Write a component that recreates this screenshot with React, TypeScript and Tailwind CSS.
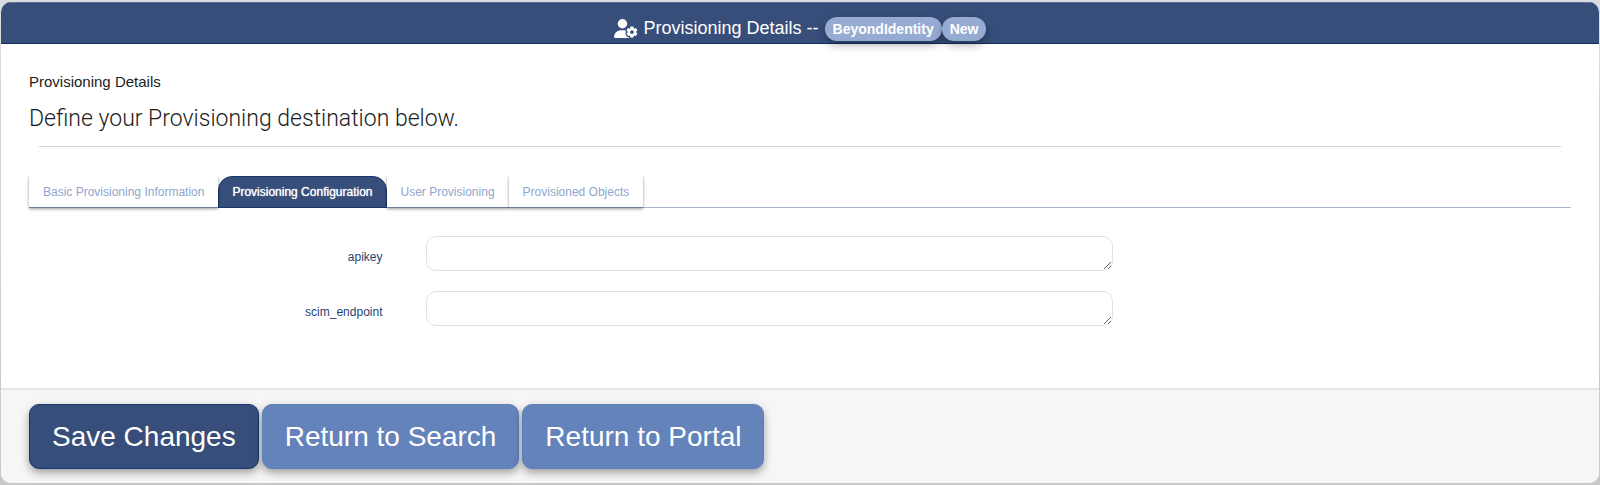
import { FaUserGear } from "react-icons/fa6";

const tabs = [
  "Basic Provisioning Information",
  "Provisioning Configuration",
  "User Provisioning",
  "Provisioned Objects",
];
const activeTab = "Provisioning Configuration";
const fields = ["apikey", "scim_endpoint"];

function Badge({ children }: { children: string }) {
  return (
    <span className="rounded-full bg-[#96abd2] px-2 text-sm leading-6 font-bold shadow-[0_4px_8px_rgba(0,0,0,0.3)]">
      {children}
    </span>
  );
}

function ActionButton({ label, primary = false }: { label: string; primary?: boolean }) {
  return (
    <button
      type="button"
      className={`h-[65px] rounded-[10px] border px-[22px] text-[28px] leading-8 text-white shadow-[0_4px_8px_rgba(0,0,0,0.35)] ${
        primary ? "border-[#17386a] bg-[#364e79]" : "border-[#5f7fb8] bg-[#6483ba]"
      }`}
    >
      {label}
    </button>
  );
}

export default function App() {
  return (
    <div className="bg-linear-to-b from-[#dadce0] to-[#c6c7c9] px-px pt-[2px] pb-[3px] font-['Liberation_Sans',Arial,sans-serif] text-[#1c1c1c]">
      <main className="overflow-hidden rounded-[10px] bg-white">
        <header className="flex h-[42px] items-end justify-center border-t border-b border-t-[#5d6f91] border-b-[#0c2f63] bg-[#364e79] pb-px text-white">
          <h1 className="flex items-center gap-[6px] text-lg leading-7">
            <FaUserGear className="h-[19px] w-6" aria-hidden="true" />
            <span>Provisioning Details --</span>
            <span className="flex pt-[2px]">
              <Badge>BeyondIdentity</Badge>
              <Badge>New</Badge>
            </span>
          </h1>
        </header>

        <section className="px-7 pt-7 pb-[62px]">
          <p className="text-[15px] leading-5">Provisioning Details</p>
          <h2 className="mt-[11px] font-['Roboto',sans-serif] text-[23px] leading-8 font-light">
            Define your Provisioning destination below.
          </h2>
          <hr className="mx-[10px] mt-[11px] border-[#d3d3d3]" />

          <div role="tablist" className="mt-[29px] flex border-b border-[#aab4cb]">
            <div className="-mb-px flex">
              {tabs.map((tab) => (
                <button
                  key={tab}
                  type="button"
                  role="tab"
                  aria-selected={tab === activeTab}
                  className={
                    tab === activeTab
                      ? "h-8 rounded-t-[14px] border border-[#17386a] bg-[#364e79] px-[13px] text-xs text-white [text-shadow:0_0_1px_#fff]"
                      : "h-8 border-b border-[#6f7c98] bg-white px-[14px] text-xs text-[#8fa6cf] shadow-[0_1px_3px_rgba(0,0,0,0.4)] [clip-path:inset(0_-2px_-4px_-2px)]"
                  }
                >
                  {tab}
                </button>
              ))}
            </div>
          </div>

          <form className="mt-7 grid gap-5">
            {fields.map((name) => (
              <div key={name} className="grid grid-cols-[25%_46%]">
                <label htmlFor={name} className="pt-[13px] pr-8 text-right text-xs leading-4 text-[#1f3f73]">
                  {name}
                </label>
                <div className="px-[11px]">
                  <textarea
                    id={name}
                    name={name}
                    rows={1}
                    className="block h-[35px] w-full resize rounded-[10px] border border-[#dee2e6] bg-white px-3 py-[6px] text-sm"
                  />
                </div>
              </div>
            ))}
          </form>
        </section>

        <footer className="flex gap-[3px] border-t-2 border-[#e6e6e6] bg-[#f6f6f6] px-7 py-[14px]">
          <ActionButton label="Save Changes" primary />
          <ActionButton label="Return to Search" />
          <ActionButton label="Return to Portal" />
        </footer>
      </main>
    </div>
  );
}
